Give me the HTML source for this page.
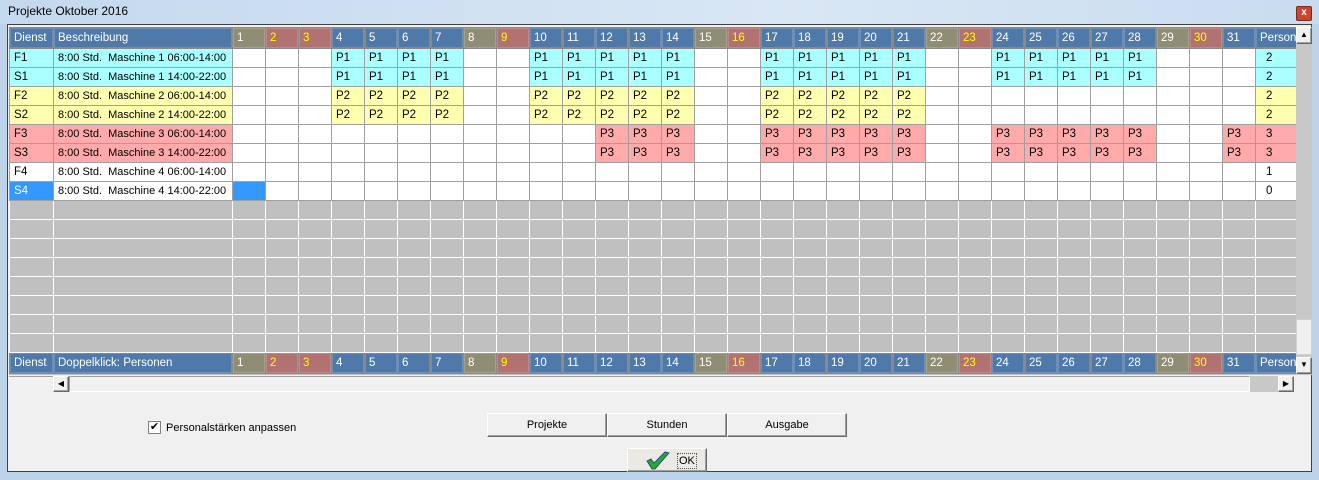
<!DOCTYPE html>
<html><head><meta charset="utf-8">
<style>
*{box-sizing:border-box}
body{margin:0;width:1319px;height:480px;overflow:hidden;background:#bcd3ea;font-family:"Liberation Sans",sans-serif;font-size:11px;position:relative}
.title{position:absolute;left:0;top:0;width:1319px;height:24px;background:linear-gradient(90deg,#c4d8ee,#d9e7f5 60%,#c9dcef);}
.title span{position:absolute;left:8px;top:4px;font-size:12px;color:#000}
.close{position:absolute;left:1296px;top:6px;width:16px;height:15px;background:#c9472f;border:1px solid #7a2a1c;border-radius:2px;color:#fff;font-size:10px;font-weight:bold;text-align:center;line-height:12px}
.client{position:absolute;left:7px;top:24px;width:1305px;height:448px;background:#f0f0f0;border:1px solid #404040}
.gridwrap{position:absolute;left:9px;top:27px;width:1287px;height:348px;overflow:hidden;background:#c0c0c0}
table{border-collapse:collapse;table-layout:fixed;width:1306px;font-size:11.5px}
td{border:1px solid #a0a0a0;padding:0 0 0 4px;height:19px;line-height:16px;white-space:nowrap;overflow:hidden;background:#fff;color:#000}
tr.h td{height:21px;background:#4f79a8;color:#fff;border:1px solid #8a8a8a;box-shadow:inset 0 0 0 1px #6d8fb6}
tr.h td.o{background:#8f8e74;box-shadow:inset 0 0 0 1px #a3a28b}
tr.h td.r{background:#b27272;box-shadow:inset 0 0 0 1px #c08989}
tr.h td.y{color:#ffff00}
tr.c td.k{background:#aaffff}
tr.yl td.k{background:#ffffb0}
tr.p td.k{background:#ffaaaa}
td.sel{background:#3399ff !important;color:#fff}
td.pc{padding-left:10px}
td.ds{font-size:11px}
tr.g td{background:#c0c0c0;border-color:#fff;height:19px}
.vs{position:absolute;left:1296px;top:27px;width:16px;height:348px;background:#c8c8c8}
.btn{position:absolute;background:#f0f0f0;border:1px solid;border-color:#fff #696969 #696969 #fff;box-shadow:inset -1px -1px 0 #a0a0a0;text-align:center}
.hs{position:absolute;left:9px;top:376px;width:1287px;height:16px;background:#f0f0f0}
</style></head><body>
<div class="title"><span>Projekte Oktober 2016</span></div>
<div class="close">x</div>
<div class="client"></div>
<div class="gridwrap">
<table>
<colgroup><col style="width:44px"><col style="width:179px"><col span="31" style="width:33px"><col style="width:60px"></colgroup>
<tr class="h"><td>Dienst</td><td>Beschreibung</td><td class="o">1</td><td class="r y">2</td><td class="r y">3</td><td>4</td><td>5</td><td>6</td><td>7</td><td class="o">8</td><td class="r y">9</td><td>10</td><td>11</td><td>12</td><td>13</td><td>14</td><td class="o">15</td><td class="r y">16</td><td>17</td><td>18</td><td>19</td><td>20</td><td>21</td><td class="o">22</td><td class="r y">23</td><td>24</td><td>25</td><td>26</td><td>27</td><td>28</td><td class="o">29</td><td class="r y">30</td><td>31</td><td>Personen</td></tr>
<tr class="c"><td class="k">F1</td><td class="k ds">8:00 Std.&nbsp; Maschine 1 06:00-14:00</td><td></td><td></td><td></td><td class="k">P1</td><td class="k">P1</td><td class="k">P1</td><td class="k">P1</td><td></td><td></td><td class="k">P1</td><td class="k">P1</td><td class="k">P1</td><td class="k">P1</td><td class="k">P1</td><td></td><td></td><td class="k">P1</td><td class="k">P1</td><td class="k">P1</td><td class="k">P1</td><td class="k">P1</td><td></td><td></td><td class="k">P1</td><td class="k">P1</td><td class="k">P1</td><td class="k">P1</td><td class="k">P1</td><td></td><td></td><td></td><td class="k pc">2</td></tr>
<tr class="c"><td class="k">S1</td><td class="k ds">8:00 Std.&nbsp; Maschine 1 14:00-22:00</td><td></td><td></td><td></td><td class="k">P1</td><td class="k">P1</td><td class="k">P1</td><td class="k">P1</td><td></td><td></td><td class="k">P1</td><td class="k">P1</td><td class="k">P1</td><td class="k">P1</td><td class="k">P1</td><td></td><td></td><td class="k">P1</td><td class="k">P1</td><td class="k">P1</td><td class="k">P1</td><td class="k">P1</td><td></td><td></td><td class="k">P1</td><td class="k">P1</td><td class="k">P1</td><td class="k">P1</td><td class="k">P1</td><td></td><td></td><td></td><td class="k pc">2</td></tr>
<tr class="yl"><td class="k">F2</td><td class="k ds">8:00 Std.&nbsp; Maschine 2 06:00-14:00</td><td></td><td></td><td></td><td class="k">P2</td><td class="k">P2</td><td class="k">P2</td><td class="k">P2</td><td></td><td></td><td class="k">P2</td><td class="k">P2</td><td class="k">P2</td><td class="k">P2</td><td class="k">P2</td><td></td><td></td><td class="k">P2</td><td class="k">P2</td><td class="k">P2</td><td class="k">P2</td><td class="k">P2</td><td></td><td></td><td></td><td></td><td></td><td></td><td></td><td></td><td></td><td></td><td class="k pc">2</td></tr>
<tr class="yl"><td class="k">S2</td><td class="k ds">8:00 Std.&nbsp; Maschine 2 14:00-22:00</td><td></td><td></td><td></td><td class="k">P2</td><td class="k">P2</td><td class="k">P2</td><td class="k">P2</td><td></td><td></td><td class="k">P2</td><td class="k">P2</td><td class="k">P2</td><td class="k">P2</td><td class="k">P2</td><td></td><td></td><td class="k">P2</td><td class="k">P2</td><td class="k">P2</td><td class="k">P2</td><td class="k">P2</td><td></td><td></td><td></td><td></td><td></td><td></td><td></td><td></td><td></td><td></td><td class="k pc">2</td></tr>
<tr class="p"><td class="k">F3</td><td class="k ds">8:00 Std.&nbsp; Maschine 3 06:00-14:00</td><td></td><td></td><td></td><td></td><td></td><td></td><td></td><td></td><td></td><td></td><td></td><td class="k">P3</td><td class="k">P3</td><td class="k">P3</td><td></td><td></td><td class="k">P3</td><td class="k">P3</td><td class="k">P3</td><td class="k">P3</td><td class="k">P3</td><td></td><td></td><td class="k">P3</td><td class="k">P3</td><td class="k">P3</td><td class="k">P3</td><td class="k">P3</td><td></td><td></td><td class="k">P3</td><td class="k pc">3</td></tr>
<tr class="p"><td class="k">S3</td><td class="k ds">8:00 Std.&nbsp; Maschine 3 14:00-22:00</td><td></td><td></td><td></td><td></td><td></td><td></td><td></td><td></td><td></td><td></td><td></td><td class="k">P3</td><td class="k">P3</td><td class="k">P3</td><td></td><td></td><td class="k">P3</td><td class="k">P3</td><td class="k">P3</td><td class="k">P3</td><td class="k">P3</td><td></td><td></td><td class="k">P3</td><td class="k">P3</td><td class="k">P3</td><td class="k">P3</td><td class="k">P3</td><td></td><td></td><td class="k">P3</td><td class="k pc">3</td></tr>
<tr><td>F4</td><td class="ds">8:00 Std.&nbsp; Maschine 4 06:00-14:00</td><td></td><td></td><td></td><td></td><td></td><td></td><td></td><td></td><td></td><td></td><td></td><td></td><td></td><td></td><td></td><td></td><td></td><td></td><td></td><td></td><td></td><td></td><td></td><td></td><td></td><td></td><td></td><td></td><td></td><td></td><td></td><td class="pc">1</td></tr>
<tr><td class="sel">S4</td><td class="ds">8:00 Std.&nbsp; Maschine 4 14:00-22:00</td><td class="sel"></td><td></td><td></td><td></td><td></td><td></td><td></td><td></td><td></td><td></td><td></td><td></td><td></td><td></td><td></td><td></td><td></td><td></td><td></td><td></td><td></td><td></td><td></td><td></td><td></td><td></td><td></td><td></td><td></td><td></td><td></td><td class="pc">0</td></tr>
<tr class="g"><td></td><td></td><td></td><td></td><td></td><td></td><td></td><td></td><td></td><td></td><td></td><td></td><td></td><td></td><td></td><td></td><td></td><td></td><td></td><td></td><td></td><td></td><td></td><td></td><td></td><td></td><td></td><td></td><td></td><td></td><td></td><td></td><td></td><td></td></tr>
<tr class="g"><td></td><td></td><td></td><td></td><td></td><td></td><td></td><td></td><td></td><td></td><td></td><td></td><td></td><td></td><td></td><td></td><td></td><td></td><td></td><td></td><td></td><td></td><td></td><td></td><td></td><td></td><td></td><td></td><td></td><td></td><td></td><td></td><td></td><td></td></tr>
<tr class="g"><td></td><td></td><td></td><td></td><td></td><td></td><td></td><td></td><td></td><td></td><td></td><td></td><td></td><td></td><td></td><td></td><td></td><td></td><td></td><td></td><td></td><td></td><td></td><td></td><td></td><td></td><td></td><td></td><td></td><td></td><td></td><td></td><td></td><td></td></tr>
<tr class="g"><td></td><td></td><td></td><td></td><td></td><td></td><td></td><td></td><td></td><td></td><td></td><td></td><td></td><td></td><td></td><td></td><td></td><td></td><td></td><td></td><td></td><td></td><td></td><td></td><td></td><td></td><td></td><td></td><td></td><td></td><td></td><td></td><td></td><td></td></tr>
<tr class="g"><td></td><td></td><td></td><td></td><td></td><td></td><td></td><td></td><td></td><td></td><td></td><td></td><td></td><td></td><td></td><td></td><td></td><td></td><td></td><td></td><td></td><td></td><td></td><td></td><td></td><td></td><td></td><td></td><td></td><td></td><td></td><td></td><td></td><td></td></tr>
<tr class="g"><td></td><td></td><td></td><td></td><td></td><td></td><td></td><td></td><td></td><td></td><td></td><td></td><td></td><td></td><td></td><td></td><td></td><td></td><td></td><td></td><td></td><td></td><td></td><td></td><td></td><td></td><td></td><td></td><td></td><td></td><td></td><td></td><td></td><td></td></tr>
<tr class="g"><td></td><td></td><td></td><td></td><td></td><td></td><td></td><td></td><td></td><td></td><td></td><td></td><td></td><td></td><td></td><td></td><td></td><td></td><td></td><td></td><td></td><td></td><td></td><td></td><td></td><td></td><td></td><td></td><td></td><td></td><td></td><td></td><td></td><td></td></tr>
<tr class="g"><td></td><td></td><td></td><td></td><td></td><td></td><td></td><td></td><td></td><td></td><td></td><td></td><td></td><td></td><td></td><td></td><td></td><td></td><td></td><td></td><td></td><td></td><td></td><td></td><td></td><td></td><td></td><td></td><td></td><td></td><td></td><td></td><td></td><td></td></tr>
<tr class="h"><td>Dienst</td><td>Doppelklick: Personen</td><td class="o">1</td><td class="r y">2</td><td class="r y">3</td><td>4</td><td>5</td><td>6</td><td>7</td><td class="o">8</td><td class="r y">9</td><td>10</td><td>11</td><td>12</td><td>13</td><td>14</td><td class="o">15</td><td class="r y">16</td><td>17</td><td>18</td><td>19</td><td>20</td><td>21</td><td class="o">22</td><td class="r y">23</td><td>24</td><td>25</td><td>26</td><td>27</td><td>28</td><td class="o">29</td><td class="r y">30</td><td>31</td><td>Personen</td></tr>
</table>
</div>
<div class="vs">
 <div class="btn" style="left:0;top:0;width:16px;height:17px;font-size:8px;line-height:14px">&#9650;</div>
 <div style="position:absolute;left:0;top:292px;width:16px;height:36px;background:#f0f0f0;border:1px solid #d0d0d0"></div>
 <div class="btn" style="left:0;top:330px;width:16px;height:17px;font-size:8px;line-height:14px">&#9660;</div>
</div>
<div class="hs">
 <div style="position:absolute;left:0;top:0;width:44px;height:16px;background:#f0f0f0;border-top:1px solid #a0a0a0"></div>
 <div class="btn" style="left:44px;top:0;width:16px;height:16px;font-size:8px;line-height:14px">&#9664;</div>
 <div style="position:absolute;left:60px;top:0;width:1181px;height:16px;background:#f0f0f0;border:1px solid #a0a0a0;border-color:#a0a0a0 #fff #fff #a0a0a0"></div>
 <div style="position:absolute;left:1241px;top:0;width:28px;height:16px;background:#c8c8c8"></div>
 <div class="btn" style="left:1269px;top:0;width:16px;height:16px;font-size:8px;line-height:14px">&#9654;</div>
</div>
<div style="position:absolute;left:148px;top:421px;width:13px;height:13px;border:1px solid #808080;background:#fff;font-size:11px;line-height:11px;text-align:center">&#10004;</div>
<div style="position:absolute;left:166px;top:422px">Personalstärken anpassen</div>
<div class="btn" style="left:487px;top:413px;width:120px;height:24px;line-height:22px">Projekte</div>
<div class="btn" style="left:607px;top:413px;width:120px;height:24px;line-height:22px">Stunden</div>
<div class="btn" style="left:727px;top:413px;width:120px;height:24px;line-height:22px">Ausgabe</div>
<div class="btn" style="left:627px;top:448px;width:80px;height:24px;line-height:22px;background:#ece9e4">
 <svg style="position:absolute;left:18px;top:2px" width="24" height="19" viewBox="0 0 24 19"><path d="M1 10 L5 8 L8 12 L19 1 L23 2 L9 18 L6 18 Z" fill="#1fb01f" stroke="#2030a0" stroke-width="0.8"/></svg>
 <span style="position:absolute;left:49px;top:4px;line-height:14px;border:1px dotted #555;padding:0 1px">OK</span>
</div>
</body></html>
